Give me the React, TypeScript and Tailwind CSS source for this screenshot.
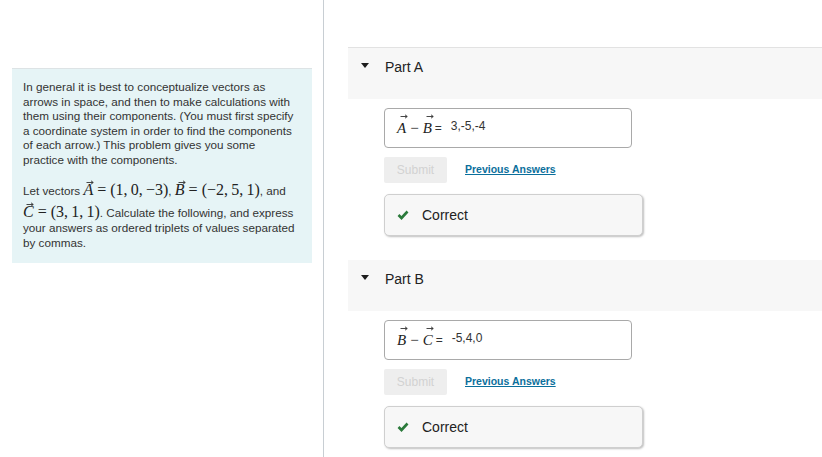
import type { ReactNode } from "react"

const sans = { fontFamily: '"Liberation Sans", Arial, sans-serif' }
const serif = { fontFamily: '"Liberation Serif", "DejaVu Serif", serif' }

// letter with a small arrow accent drawn on top
function Vec({ l }: { l: string }) {
  return (
    <span className="relative inline-block italic" style={serif}>
      {l}
      <svg width="8" height="5" viewBox="0 0 8 5" className="absolute left-[3px] top-[-3px]">
        <line x1="0.5" y1="2.5" x2="7" y2="2.5" stroke="#333" strokeWidth="0.9" />
        <polyline points="5,0.8 7.3,2.5 5,4.2" fill="none" stroke="#333" strokeWidth="0.9" />
      </svg>
    </span>
  )
}

function M({ children, size = "text-[16px]" }: { children: ReactNode; size?: string }) {
  return <span className={`${size} text-[#222]`} style={serif}>{children}</span>
}

function Eq() {
  return <span className="mx-[4px]">=</span>
}

function Check() {
  return (
    <svg width="12" height="10" viewBox="0 0 12 10">
      <polyline points="1.5,5 4.5,8 10.5,1.5" fill="none" stroke="#2b7a3b" strokeWidth="2.6" />
    </svg>
  )
}

function Part({ name, lhs, answer }: { name: string; lhs: ReactNode; answer: string }) {
  return (
    <div>
      <div className="bg-[#f7f7f7] h-[51px] flex items-start pt-[9px] pl-[13px] gap-[16px]">
        <svg width="8" height="6" viewBox="0 0 8 6" className="mt-[6px]">
          <polygon points="0,0 8,0 4,5" fill="#1d1d1d" />
        </svg>
        <span className="text-[14px] text-[#222]">{name}</span>
      </div>
      <div className="pl-[36px] pt-[9px]">
        <div className="w-[248px] h-[40px] border border-[#a9a9a9] rounded-[4px] flex items-center pl-[12px] gap-[9px]">
          <span className="text-[12px] text-[#333] flex items-center">{lhs}</span>
          <span className="text-[12px] text-[#333] mt-[-4px]">{answer}</span>
        </div>
        <div className="flex items-center mt-[9px] gap-[18px]">
          <div className="w-[63px] h-[26px] bg-[#eeeeee] rounded-[2px] flex items-center justify-center text-[12px] text-[#d2d2d2]">
            Submit
          </div>
          <a className="text-[10.5px] font-bold text-[#0b6f9c] underline">Previous Answers</a>
        </div>
        <div className="mt-[11px] w-[259px] h-[42px] bg-[#f7f7f7] border border-[#cfcfcf] rounded-[5px] shadow-[1px_1px_2px_rgba(0,0,0,0.25)] flex items-center pl-[12px] gap-[13px]">
          <Check />
          <span className="text-[14px] text-[#222]">Correct</span>
        </div>
      </div>
    </div>
  )
}

const intro = [
  "In general it is best to conceptualize vectors as",
  "arrows in space, and then to make calculations with",
  "them using their components. (You must first specify",
  "a coordinate system in order to find the components",
  "of each arrow.) This problem gives you some",
  "practice with the components.",
]

export default function App() {
  return (
    <div className="flex w-[822px] h-[457px] bg-white overflow-hidden" style={sans}>
      <div className="w-[324px] border-r border-[#c8ced3] pt-[68px] pl-[12px] shrink-0">
        <div className="w-[300px] bg-[#e6f4f6] border-t border-[#dde3e5] pl-[11px] pt-[11px] pb-[13px] text-[11.7px] leading-[14.5px] text-[#333] whitespace-nowrap">
          {intro.map((t) => (
            <div key={t} className="h-[14.5px]">{t}</div>
          ))}
          <div className="h-[14.5px] mt-[16px]">
            Let vectors <M><Vec l="A" /><Eq />(1,{"\u2009"}0,{"\u2009"}−3)</M>,{" "}
            <M><Vec l="B" /><Eq />(−2,{"\u2009"}5,{"\u2009"}1)</M>, and
          </div>
          <div className="h-[14.5px] mt-[7.5px]">
            <M><Vec l="C" /><Eq />(3,{"\u2009"}1,{"\u2009"}1)</M>. Calculate the following, and express
          </div>
          <div className="h-[14.5px] mt-[1.5px]">your answers as ordered triplets of values separated</div>
          <div className="h-[14.5px]">by commas.</div>
        </div>
      </div>
      <div className="flex-1 pl-[24px] pt-[47px]">
        <div className="border-t border-[#e2e2e2]">
          <Part
            name="Part A"
            lhs={<><M size="text-[15px]"><Vec l="A" /><span className="mx-[4px]">−</span><Vec l="B" /></M><span className="ml-[3px]">=</span></>}
            answer="3,-5,-4"
          />
        </div>
        <div className="mt-[24px]">
          <Part
            name="Part B"
            lhs={<><M size="text-[15px]"><Vec l="B" /><span className="mx-[4px]">−</span><Vec l="C" /></M><span className="ml-[3px]">=</span></>}
            answer="-5,4,0"
          />
        </div>
      </div>
    </div>
  )
}
